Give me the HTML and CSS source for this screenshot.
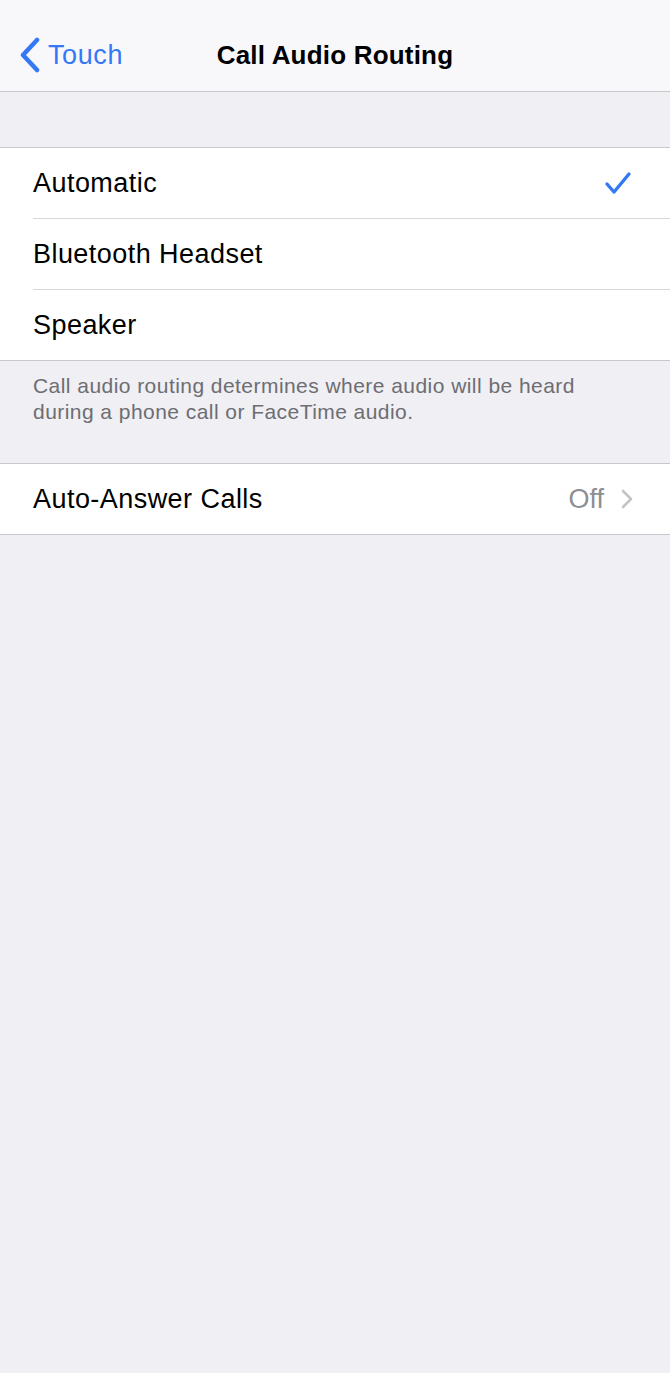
FILE: index.html
```html
<!DOCTYPE html>
<html lang="en">
<head>
    <meta charset="UTF-8">
    <meta name="viewport" content="width=device-width, initial-scale=1.0">
    <title>Call Audio Routing</title>
    <link rel="stylesheet" href="styles.css">
</head>
<body>
    <header class="navbar">
        <a class="back" href="#">
            <svg class="back-icon" viewBox="0 0 22 36" width="22" height="36">
                <path d="M18 3 L4 18 L18 33" fill="none" stroke="#3478f6" stroke-width="4.5" stroke-linecap="round" stroke-linejoin="round"/>
            </svg>
            <span>Touch</span>
        </a>
        <h1 class="title">Call Audio Routing</h1>
    </header>

    <section class="group first">
        <div class="row">
            <span class="label">Automatic</span>
            <svg class="check" viewBox="0 0 28 24" width="28" height="24">
                <path d="M3 13 L10 21 L25 3" fill="none" stroke="#3478f6" stroke-width="3.4" stroke-linecap="round" stroke-linejoin="round"/>
            </svg>
        </div>
        <div class="row">
            <span class="label">Bluetooth Headset</span>
        </div>
        <div class="row">
            <span class="label">Speaker</span>
        </div>
    </section>
    <p class="footer">Call audio routing determines where audio will be heard during a phone call or FaceTime audio.</p>

    <section class="group">
        <div class="row">
            <span class="label">Auto-Answer Calls</span>
            <span class="value">Off</span>
            <svg class="chevron" viewBox="0 0 12 20" width="12" height="20">
                <path d="M2 2 L10 10 L2 18" fill="none" stroke="#c4c4c8" stroke-width="2.6" stroke-linecap="round" stroke-linejoin="round"/>
            </svg>
        </div>
    </section>
</body>
</html>
```

FILE: styles.css
```css
body {
    margin: 0;
    font-family: "Liberation Sans", Arial, sans-serif;
    background-color: #efeff4;
    color: #000;
    min-height: 1373px;
}
.navbar {
    height: 91px;
    background-color: #f8f8fa;
    border-bottom: 1px solid #c8c7cc;
    display: flex;
    align-items: center;
    justify-content: center;
    position: relative;
}
.back {
    position: absolute;
    left: 19px;
    top: 37px;
    display: flex;
    align-items: center;
    gap: 7px;
    color: #3478f6;
    text-decoration: none;
    font-size: 27px;
    letter-spacing: 0.6px;
}
.back-icon {
    display: block;
}
.title {
    margin: 20px 0 0;
    font-size: 26px;
    font-weight: bold;
    letter-spacing: 0.2px;
}
.group {
    background-color: #fff;
    border-top: 1px solid #c8c7cc;
    border-bottom: 1px solid #c8c7cc;
    margin-top: 55px;
}
.row {
    height: 70px;
    margin-left: 33px;
    padding-right: 37px;
    display: flex;
    align-items: center;
    border-bottom: 1px solid #d8d8dc;
}
.row:last-child {
    border-bottom: none;
}
.label {
    flex: 1;
    font-size: 27px;
    letter-spacing: 0.45px;
}
.check {
    display: block;
    margin-right: 1px;
}
.value {
    font-size: 27px;
    color: #8e8e93;
    margin-right: 17px;
}
.chevron {
    display: block;
}
.footer {
    margin: 0;
    padding: 12px 60px 0 33px;
    font-size: 21px;
    line-height: 26px;
    letter-spacing: 0.45px;
    color: #6d6d72;
    height: 90px;
    box-sizing: border-box;
}
.footer + .group {
    margin-top: 12px;
}
```
